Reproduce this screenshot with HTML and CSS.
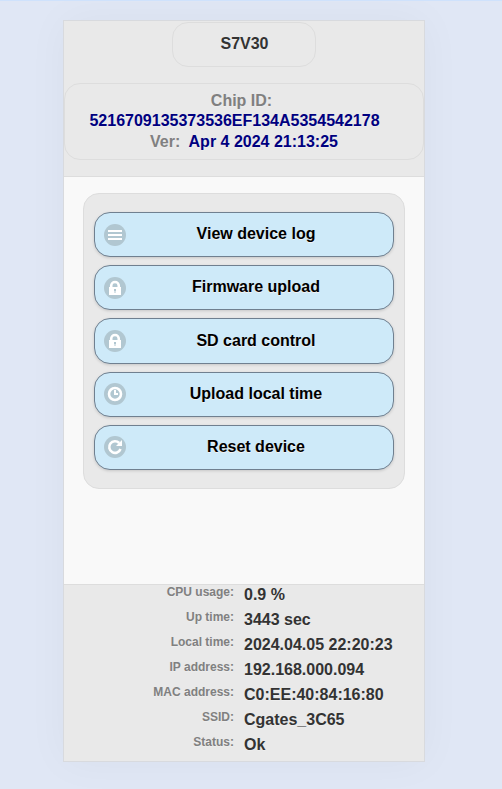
FILE: index.html
```html
<!DOCTYPE html>
<html lang="en">
<head>
<meta charset="utf-8">
<title>S7V30</title>
<link rel="stylesheet" href="styles.css">
</head>
<body>
<div class="page">
  <header class="header">
    <h1 class="title">S7V30</h1>
    <div class="chip">
      <div><span class="muted">Chip ID:</span></div>
      <div class="chip-id">5216709135373536EF134A5354542178</div>
      <div class="version"><span class="muted">Ver:</span>&nbsp; Apr 4 2024 21:13:25</div>
    </div>
  </header>
  <main class="content">
    <nav class="panel">
      <a class="btn"><svg class="icon" viewBox="0 0 22 22"><circle class="disc" cx="11" cy="11" r="11"/><path class="fill" d="M4 6h14v2H4zM4 10h14v2H4zM4 14h14v2H4z"/></svg>View device log</a>
      <a class="btn"><svg class="icon" viewBox="0 0 22 22"><circle class="disc" cx="11" cy="11" r="11"/><path class="line" d="M7.2 11V8.8a3.8 3.8 0 0 1 7.6 0V11"/><path class="fill" fill-rule="evenodd" d="M5 10h12v8H5zM10 12v2h.5v2h1v-2h.5v-2z"/></svg>Firmware upload</a>
      <a class="btn"><svg class="icon" viewBox="0 0 22 22"><circle class="disc" cx="11" cy="11" r="11"/><path class="line" d="M7.2 11V8.8a3.8 3.8 0 0 1 7.6 0V11"/><path class="fill" fill-rule="evenodd" d="M5 10h12v8H5zM10 12v2h.5v2h1v-2h.5v-2z"/></svg>SD card control</a>
      <a class="btn"><svg class="icon" viewBox="0 0 22 22"><circle class="disc" cx="11" cy="11" r="11"/><circle class="line" cx="11" cy="11" r="6"/><path class="fill" d="M10 7h2v3h2v2h-4z"/></svg>Upload local time</a>
      <a class="btn"><svg class="icon" viewBox="0 0 22 22"><circle class="disc" cx="11" cy="11" r="11"/><path class="line" d="M15.2 7A5.8 5.8 0 1 0 16.5 13"/><path class="fill" d="M18 4v6h-6z"/></svg>Reset device</a>
    </nav>
  </main>
  <footer class="footer">
    <div class="label">CPU usage:</div><div class="value">0.9 %</div>
    <div class="label">Up time:</div><div class="value">3443 sec</div>
    <div class="label">Local time:</div><div class="value">2024.04.05 22:20:23</div>
    <div class="label">IP address:</div><div class="value">192.168.000.094</div>
    <div class="label">MAC address:</div><div class="value">C0:EE:40:84:16:80</div>
    <div class="label">SSID:</div><div class="value">Cgates_3C65</div>
    <div class="label">Status:</div><div class="value">Ok</div>
  </footer>
</div>
</body>
</html>
```
FILE: styles.css
```css
* { box-sizing: border-box; }
html { min-height: 100%; background: #e0e7f5; }
body {
  margin: 0;
  padding-top: 19px;
  height: 789px;
  overflow: hidden;
  border-top: 1px solid #cfe2fc;
  font: bold 16px/20.8px Arial, "Liberation Sans", sans-serif;
  color: #333;
}
.page {
  width: 362px;
  height: 742px;
  margin-left: 63px;
  display: flex;
  flex-direction: column;
  border: 1px solid #d8dade;
  background: #f9f9f9;
  box-shadow: 0 0 40px rgba(0, 0, 0, .04);
}
.header {
  height: 156px;
  padding-top: 1px;
  background: #e9e9e9;
  border-bottom: 1px solid #ddd;
  text-align: center;
  text-shadow: 0 1px 0 #eee;
}
.title {
  width: 144px;
  height: 45px;
  margin: 0 auto;
  padding: 11px 0 0 1px;
  border: 1px solid #ddd;
  border-radius: 16px;
  font: inherit;
}
.chip {
  height: 77px;
  margin-top: 16px;
  padding-top: 7px;
  border: 1px solid #ddd;
  border-radius: 16px;
  color: navy;
}
.chip > div { height: 20px; }
.chip > div:first-child { padding-right: 5px; }
.chip > .chip-id { height: 21px; line-height: 20px; padding-right: 19px; }
.muted { color: gray; }
.content { flex: 1; padding: 16px 19px; }
.panel {
  height: 296px;
  padding: 18px 10px;
  border: 1px solid #ddd;
  border-radius: 16px;
  background: #e9e9e9;
}
.btn {
  position: relative;
  display: block;
  height: 45.2px;
  margin-bottom: 8px;
  padding-top: 11.2px;
  padding-left: 24px;
  border: 1px solid #708090;
  border-radius: 16px;
  background: #ceeaf9;
  color: #000;
  text-align: center;
  text-shadow: 0 1px 0 #f3f3f3;
  box-shadow: 0 1px 3px rgba(0, 0, 0, .15);
}
.icon { position: absolute; left: 9px; top: 10.6px; width: 22px; height: 22px; }
.disc { fill: #b1c7d1; }
.fill { fill: #fff; }
.line { fill: none; stroke: #fff; stroke-width: 2.6; }
.footer {
  height: 177px;
  display: grid;
  grid-template-columns: 170px 1fr;
  grid-auto-rows: 25px;
  column-gap: 10px;
  background: #e9e9e9;
  border-top: 1px solid #ddd;
  text-shadow: 0 1px 0 #eee;
}
.label { color: gray; font-size: 12px; line-height: 15px; text-align: right; }
.value { line-height: 20px; }
```
